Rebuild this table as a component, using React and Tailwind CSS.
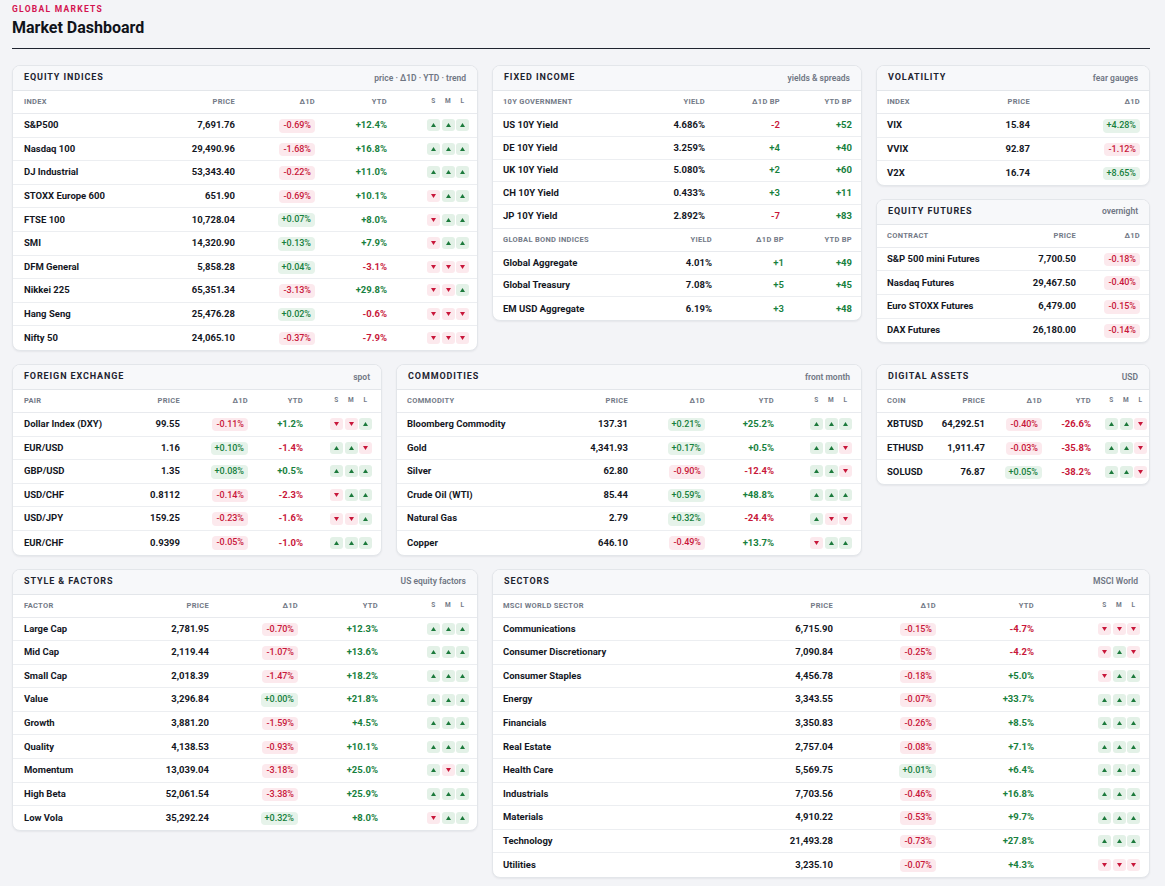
import React from "react";

const RED = "text-[#c8173a]";
const GREEN = "text-[#17803d]";

const tone = (v) => (v.trim().startsWith("-") ? RED : GREEN);

function Card({ title, note, className = "", children }) {
  return (
    <section
      className={`bg-white rounded-[8px] border border-[#e3e6ea] shadow-[0_1px_2px_rgba(16,24,40,0.06)] overflow-hidden ${className}`}
    >
      <div className="h-[25px] flex items-center justify-between px-[11px] bg-[#f7f8fa] border-b border-[#e3e6ea]">
        <h3 className="text-[9px] font-bold tracking-[0.1em] text-[#1d2330] uppercase">
          {title}
        </h3>
        <span className="text-[8.5px] font-semibold text-[#6f7683]">{note}</span>
      </div>
      {children}
    </section>
  );
}

function Pill({ value }) {
  const up = !value.startsWith("-");
  return (
    <span
      className={`inline-block h-[13.5px] leading-[13.5px] px-[4px] rounded-[4px] text-[9px] font-medium ${
        up ? "bg-[#e6f3ea] text-[#17803d]" : "bg-[#fce9ed] text-[#c8173a]"
      }`}
    >
      {value}
    </span>
  );
}

function Badge({ up }) {
  return (
    <span
      className={`w-[13px] h-[12px] rounded-[3px] flex items-center justify-center ${
        up ? "bg-[#e3f1e7]" : "bg-[#fce9ed]"
      }`}
    >
      <svg width="5" height="4" viewBox="0 0 5 4">
        {up ? (
          <path d="M2.5 0 L5 4 L0 4 Z" fill="#1c7a3c" />
        ) : (
          <path d="M0 0 L5 0 L2.5 4 Z" fill="#c8173a" />
        )}
      </svg>
    </span>
  );
}

function Trend({ t }) {
  return (
    <div className="flex justify-end gap-[1.5px]">
      {t.split("").map((c, i) => (
        <Badge key={i} up={c === "u"} />
      ))}
    </div>
  );
}

function TrendLabels() {
  return (
    <div className="flex justify-end gap-[1.5px]">
      {["S", "M", "L"].map((l) => (
        <span key={l} className="w-[13px] text-center text-[6.5px]">
          {l}
        </span>
      ))}
    </div>
  );
}

function HeadRow({ cols, labels, pad, trend }) {
  return (
    <div
      className={`grid ${cols} ${pad} h-[23px] items-center border-b border-[#e8eaee] text-[7.5px] font-bold uppercase tracking-[0.04em] text-[#737a87]`}
    >
      {labels.map((l, i) => (
        <div key={i} className={i === 0 ? "text-left" : "text-right"}>
          {l}
        </div>
      ))}
      {trend && <TrendLabels />}
    </div>
  );
}

// generic market table: name, price, Δ1D pill, YTD, trend
function MarketTable({ cols, pad, labels, rows, rowH = "h-[23.6px]", pills = true, trend = true }) {
  return (
    <div>
      <HeadRow cols={cols} labels={labels} pad={pad} trend={trend} />
      {rows.map((r, i) => (
        <div
          key={r[0]}
          className={`grid ${cols} ${pad} ${rowH} items-center text-[9.5px] font-bold text-[#14171f] ${
            i < rows.length - 1 ? "border-b border-[#eceef1]" : ""
          }`}
        >
          <div className="whitespace-nowrap">{r[0]}</div>
          <div className="text-right tabular-nums">{r[1]}</div>
          <div className="text-right tabular-nums">
            {pills ? <Pill value={r[2]} /> : <span className={`font-semibold ${tone(r[2])}`}>{r[2]}</span>}
          </div>
          {r[3] !== undefined && (
            <div className={`text-right tabular-nums font-bold ${tone(r[3])}`}>{r[3]}</div>
          )}
          {trend && <Trend t={r[4]} />}
        </div>
      ))}
    </div>
  );
}

const equity = [
  ["S&P500", "7,691.76", "-0.69%", "+12.4%", "uuu"],
  ["Nasdaq 100", "29,490.96", "-1.68%", "+16.8%", "uuu"],
  ["DJ Industrial", "53,343.40", "-0.22%", "+11.0%", "uuu"],
  ["STOXX Europe 600", "651.90", "-0.69%", "+10.1%", "duu"],
  ["FTSE 100", "10,728.04", "+0.07%", "+8.0%", "duu"],
  ["SMI", "14,320.90", "+0.13%", "+7.9%", "duu"],
  ["DFM General", "5,858.28", "+0.04%", "-3.1%", "ddd"],
  ["Nikkei 225", "65,351.34", "-3.13%", "+29.8%", "ddu"],
  ["Hang Seng", "25,476.28", "+0.02%", "-0.6%", "ddd"],
  ["Nifty 50", "24,065.10", "-0.37%", "-7.9%", "ddd"],
];

const gov = [
  ["US 10Y Yield", "4.686%", "-2", "+52"],
  ["DE 10Y Yield", "3.259%", "+4", "+40"],
  ["UK 10Y Yield", "5.080%", "+2", "+60"],
  ["CH 10Y Yield", "0.433%", "+3", "+11"],
  ["JP 10Y Yield", "2.892%", "-7", "+83"],
];

const bonds = [
  ["Global Aggregate", "4.01%", "+1", "+49"],
  ["Global Treasury", "7.08%", "+5", "+45"],
  ["EM USD Aggregate", "6.19%", "+3", "+48"],
];

const vol = [
  ["VIX", "15.84", "+4.28%"],
  ["VVIX", "92.87", "-1.12%"],
  ["V2X", "16.74", "+8.65%"],
];

const futures = [
  ["S&P 500 mini Futures", "7,700.50", "-0.18%"],
  ["Nasdaq Futures", "29,467.50", "-0.40%"],
  ["Euro STOXX Futures", "6,479.00", "-0.15%"],
  ["DAX Futures", "26,180.00", "-0.14%"],
];

const fx = [
  ["Dollar Index (DXY)", "99.55", "-0.11%", "+1.2%", "ddu"],
  ["EUR/USD", "1.16", "+0.10%", "-1.4%", "uud"],
  ["GBP/USD", "1.35", "+0.08%", "+0.5%", "uuu"],
  ["USD/CHF", "0.8112", "-0.14%", "-2.3%", "duu"],
  ["USD/JPY", "159.25", "-0.23%", "-1.6%", "ddu"],
  ["EUR/CHF", "0.9399", "-0.05%", "-1.0%", "uuu"],
];

const commodities = [
  ["Bloomberg Commodity", "137.31", "+0.21%", "+25.2%", "uuu"],
  ["Gold", "4,341.93", "+0.17%", "+0.5%", "uud"],
  ["Silver", "62.80", "-0.90%", "-12.4%", "uud"],
  ["Crude Oil (WTI)", "85.44", "+0.59%", "+48.8%", "uuu"],
  ["Natural Gas", "2.79", "+0.32%", "-24.4%", "udd"],
  ["Copper", "646.10", "-0.49%", "+13.7%", "duu"],
];

const digital = [
  ["XBTUSD", "64,292.51", "-0.40%", "-26.6%", "uud"],
  ["ETHUSD", "1,911.47", "-0.03%", "-35.8%", "uud"],
  ["SOLUSD", "76.87", "+0.05%", "-38.2%", "uud"],
];

const factors = [
  ["Large Cap", "2,781.95", "-0.70%", "+12.3%", "uuu"],
  ["Mid Cap", "2,119.44", "-1.07%", "+13.6%", "uuu"],
  ["Small Cap", "2,018.39", "-1.47%", "+18.2%", "uuu"],
  ["Value", "3,296.84", "+0.00%", "+21.8%", "uuu"],
  ["Growth", "3,881.20", "-1.59%", "+4.5%", "uuu"],
  ["Quality", "4,138.53", "-0.93%", "+10.1%", "uuu"],
  ["Momentum", "13,039.04", "-3.18%", "+25.0%", "udu"],
  ["High Beta", "52,061.54", "-3.38%", "+25.9%", "uuu"],
  ["Low Vola", "35,292.24", "+0.32%", "+8.0%", "duu"],
];

const sectors = [
  ["Communications", "6,715.90", "-0.15%", "-4.7%", "ddd"],
  ["Consumer Discretionary", "7,090.84", "-0.25%", "-4.2%", "dud"],
  ["Consumer Staples", "4,456.78", "-0.18%", "+5.0%", "duu"],
  ["Energy", "3,343.55", "-0.07%", "+33.7%", "uuu"],
  ["Financials", "3,350.83", "-0.26%", "+8.5%", "uuu"],
  ["Real Estate", "2,757.04", "-0.08%", "+7.1%", "uuu"],
  ["Health Care", "5,569.75", "+0.01%", "+6.4%", "uuu"],
  ["Industrials", "7,703.56", "-0.46%", "+16.8%", "uuu"],
  ["Materials", "4,910.22", "-0.53%", "+9.7%", "uuu"],
  ["Technology", "21,493.28", "-0.73%", "+27.8%", "uuu"],
  ["Utilities", "3,235.10", "-0.07%", "+4.3%", "ddd"],
];

const D1 = "Δ1D";

export default function App() {
  return (
    <div
      className="min-h-screen bg-[#f3f4f7] pl-[12px] pr-[15px] pt-[4px] pb-[10px]"
      style={{ fontFamily: "Roboto, 'Liberation Sans', sans-serif" }}
    >
      <header className="pb-[10px] border-b border-[#1f2430]">
        <div className="text-[8.5px] leading-[10px] font-bold tracking-[0.15em] text-[#d3134f]">
          GLOBAL MARKETS
        </div>
        <h1 className="mt-[4px] text-[16px] leading-[20px] font-bold text-[#10131a]">
          Market Dashboard
        </h1>
      </header>

      <div className="mt-[16px] flex flex-col gap-[13px]">
        <div className="grid grid-cols-12 gap-x-[14px] items-start">
          <Card title="Equity Indices" note="price · Δ1D · YTD · trend" className="col-span-5">
            <MarketTable
              cols="grid-cols-[1fr_94px_80px_72px_82px]"
              pad="pl-[11px] pr-[8px]"
              labels={["Index", "Price", D1, "YTD"]}
              rows={equity}
            />
          </Card>

          <Card title="Fixed Income" note="yields & spreads" className="col-span-4">
            <MarketTable
              cols="grid-cols-[1fr_90px_75px_72px]"
              pad="pl-[10px] pr-[9px]"
              labels={["10Y Government", "Yield", `${D1} BP`, "YTD BP"]}
              rows={gov}
              rowH="h-[22.75px]"
              pills={false}
              trend={false}
            />
            <div className="border-t border-[#e8eaee]">
              <MarketTable
                cols="grid-cols-[1fr_90px_72px_68px]"
                pad="pl-[10px] pr-[9px]"
                labels={["Global Bond Indices", "Yield", `${D1} BP`, "YTD BP"]}
                rows={bonds}
                rowH="h-[22.75px]"
                pills={false}
                trend={false}
              />
            </div>
          </Card>

          <div className="col-span-3 flex flex-col gap-[13px]">
            <Card title="Volatility" note="fear gauges">
              <MarketTable
                cols="grid-cols-[1fr_80px_110px]"
                pad="pl-[10px] pr-[9px]"
                labels={["Index", "Price", D1]}
                rows={vol}
                trend={false}
              />
            </Card>
            <Card title="Equity Futures" note="overnight">
              <MarketTable
                cols="grid-cols-[1fr_80px_64px]"
                pad="pl-[10px] pr-[9px]"
                labels={["Contract", "Price", D1]}
                rows={futures}
                trend={false}
              />
            </Card>
          </div>
        </div>

        <div className="grid grid-cols-12 gap-x-[14px] items-start">
          <Card title="Foreign Exchange" note="spot" className="col-span-4">
            <MarketTable
              cols="grid-cols-[1fr_70px_68px_55px_69px]"
              pad="pl-[11px] pr-[9px]"
              labels={["Pair", "Price", D1, "YTD"]}
              rows={fx}
            />
          </Card>
          <Card title="Commodities" note="front month" className="col-span-5">
            <MarketTable
              cols="grid-cols-[1fr_90px_77px_69px_78px]"
              pad="pl-[10px] pr-[9px]"
              labels={["Commodity", "Price", D1, "YTD"]}
              rows={commodities}
            />
          </Card>
          <Card title="Digital Assets" note="USD" className="col-span-3">
            <MarketTable
              cols="grid-cols-[1fr_60px_57px_49px_56px]"
              pad="pl-[10px] pr-[2px]"
              labels={["Coin", "Price", D1, "YTD"]}
              rows={digital}
            />
          </Card>
        </div>

        <div className="grid grid-cols-12 gap-x-[14px] items-start">
          <Card title="Style & Factors" note="US equity factors" className="col-span-5">
            <MarketTable
              cols="grid-cols-[1fr_90px_89px_80px_91px]"
              pad="pl-[11px] pr-[8px]"
              labels={["Factor", "Price", D1, "YTD"]}
              rows={factors}
            />
          </Card>
          <Card title="Sectors" note="MSCI World" className="col-span-7">
            <MarketTable
              cols="grid-cols-[1fr_100px_103px_98px_106px]"
              pad="pl-[10px] pr-[9px]"
              labels={["MSCI World Sector", "Price", D1, "YTD"]}
              rows={sectors}
            />
          </Card>
        </div>
      </div>
    </div>
  );
}
